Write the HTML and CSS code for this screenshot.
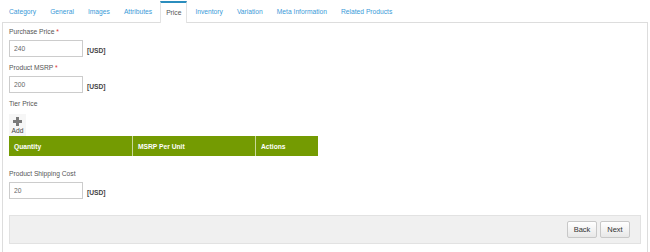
FILE: index.html
```html
<!DOCTYPE html>
<html lang="en">
<head>
<meta charset="UTF-8">
<title>Product - Price</title>
<link rel="stylesheet" href="styles.css">
</head>
<body>
<ul class="tabs">
  <li><a href="#">Category</a></li>
  <li><a href="#">General</a></li>
  <li><a href="#">Images</a></li>
  <li><a href="#">Attributes</a></li>
  <li class="active"><a href="#">Price</a></li>
  <li><a href="#">Inventory</a></li>
  <li><a href="#">Variation</a></li>
  <li><a href="#">Meta Information</a></li>
  <li><a href="#">Related Products</a></li>
</ul>
<div class="panel">
  <div class="field">
    <label>Purchase Price <span class="req">*</span></label>
    <div class="row"><input type="text" value="240"><span class="unit">[USD]</span></div>
  </div>
  <div class="field">
    <label>Product MSRP <span class="req">*</span></label>
    <div class="row"><input type="text" value="200"><span class="unit">[USD]</span></div>
  </div>
  <div class="field tier">
    <label>Tier Price</label>
    <button class="add">
      <svg width="9" height="9" viewBox="0 0 9 9"><path d="M3 0h3v3h3v3H6v3H3V6H0V3h3z" fill="#7a7a7a"/></svg>
      <span>Add</span>
    </button>
    <table class="grid">
      <tr>
        <th class="c1">Quantity</th>
        <th class="c2">MSRP Per Unit</th>
        <th class="c3">Actions</th>
      </tr>
    </table>
  </div>
  <div class="field ship">
    <label>Product Shipping Cost</label>
    <div class="row"><input type="text" value="20"><span class="unit">[USD]</span></div>
  </div>
  <div class="footer">
    <button class="btn">Back</button>
    <button class="btn">Next</button>
  </div>
</div>
</body>
</html>
```
FILE: styles.css
```css
html, body {
  margin: 0;
  background: #fff;
}
body {
  font-family: "Liberation Sans", Arial, sans-serif;
  font-size: 6.7px;
  color: #555;
  padding: 0 2px 0 2px;
}
.tabs {
  list-style: none;
  margin: 0;
  padding: 1px 0 0 1px;
  display: flex;
  height: 21px;
  border-bottom: 1px solid #ddd;
}
.tabs li {
  margin-right: 2px;
  border: 1px solid transparent;
  border-bottom: 0;
  height: 20px;
  display: flex;
  align-items: center;
}
.tabs li a {
  display: block;
  padding: 0 5px;
  color: #3a9ad8;
  text-decoration: none;
  line-height: 20px;
}
.tabs li.active {
  border-color: #e3e3e3;
  border-top: 2px solid #2b8dbd;
  background: #fff;
  height: 20px;
  margin-bottom: -1px;
}
.tabs li.active a {
  color: #555;
}
.panel {
  border: 1px solid #ddd;
  border-top: 0;
  padding: 4px 6px 5px 6px;
  height: 223px;
}
.field label {
  display: block;
  line-height: 10px;
  margin-bottom: 3px;
}
.req {
  color: #e03030;
}
.field {
  margin-bottom: 6px;
}
.row {
  display: flex;
  align-items: center;
}
.row input {
  width: 74px;
  height: 17px;
  box-sizing: border-box;
  border: 1px solid #ccc;
  padding: 0 4px;
  font: inherit;
  color: #666;
  margin: 0;
}
.unit {
  font-weight: bold;
  color: #444;
  margin-left: 4px;
  margin-top: 3px;
}
.tier label {
  margin-bottom: 5px;
}
.add {
  display: flex;
  flex-direction: column;
  align-items: center;
  width: 17px;
  height: 22px;
  box-sizing: border-box;
  padding: 3px 0 0 0;
  margin: 0;
  border: 0;
  background: #f6f6f6;
  font: inherit;
  color: #444;
  line-height: 8px;
}
.add svg {
  display: block;
  margin-bottom: 1px;
}
.grid {
  border-collapse: collapse;
  width: 309px;
  margin-bottom: 13px;
}
.grid th {
  background: #749b02;
  color: #fff;
  font-weight: bold;
  text-align: left;
  height: 20px;
  padding: 0 5px;
  border-left: 1px solid #c9d99a;
}
.grid th.c1 { width: 113px; border-left: 0; }
.grid th.c2 { width: 112px; }
.footer {
  margin-top: 16px;
  background: #f0f0f0;
  border: 1px solid #e2e2e2;
  height: 27px;
  display: flex;
  justify-content: flex-end;
  align-items: center;
  gap: 3px;
  padding-right: 10px;
}
.btn {
  height: 17px;
  width: 30px;
  padding: 0;
  border: 1px solid #c8c8c8;
  border-radius: 2px;
  background: linear-gradient(#fff, #e8e8e8);
  font: inherit;
  font-size: 7.5px;
  color: #333;
}
```
